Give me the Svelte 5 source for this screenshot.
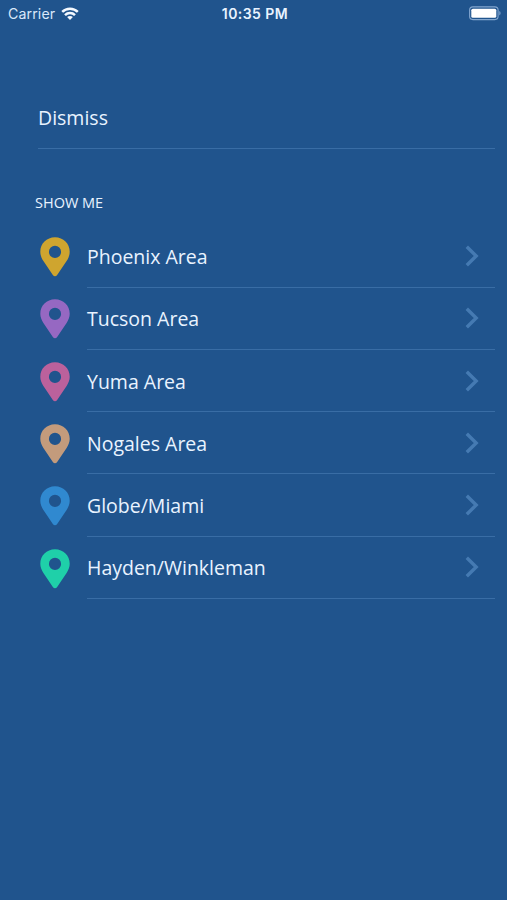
<script>
  const areas = [
    { name: 'Phoenix Area', color: '#cfa52f' },
    { name: 'Tucson Area', color: '#9668c2' },
    { name: 'Yuma Area', color: '#bb619c' },
    { name: 'Nogales Area', color: '#c39b7c' },
    { name: 'Globe/Miami', color: '#3089d0' },
    { name: 'Hayden/Winkleman', color: '#1fd0a9' }
  ];
</script>

<main>
  <header>
    <div class="carrier">
      <span>Carrier</span>
      <svg width="18" height="13" viewBox="0 0 18 13" fill="none" stroke="#f4f9ff" stroke-width="2.5">
        <path d="M1.2 4.9C5.5.7 12.5.7 16.8 4.9" />
        <path d="M4 8.1c2.8-2.7 7.2-2.7 10 0" />
        <path d="M9 12.9 6.1 10.1c1.6-1.5 4.2-1.5 5.8 0z" fill="#f4f9ff" stroke="none" />
      </svg>
    </div>
    <time>10:35 PM</time>
    <svg class="battery" width="33" height="15" viewBox="0 0 33 15">
      <rect x="0.6" y="0.9" width="28.5" height="12.7" rx="3.3" fill="none" stroke="#82a6cf" stroke-width="1.1" />
      <rect x="2.3" y="2.7" width="25" height="9.1" rx="1.6" fill="#fff" />
      <path d="M30.3 5.1c1.7.6 1.7 3.7 0 4.3z" fill="#82a6cf" />
    </svg>
  </header>

  <button class="dismiss">Dismiss</button>
  <h2>SHOW ME</h2>

  <ul>
    {#each areas as area}
      <li>
        <svg class="pin" width="30" height="40" viewBox="0 0 30 40">
          <path fill={area.color} fill-rule="evenodd" d="M15 .3C6.6.3.3 6.7.3 14.8c0 3.4 1.3 6.4 3.1 9.3l9.6 14.1c1 1.5 3 1.5 4 0l9.6-14.1c1.8-2.9 3.1-5.9 3.1-9.3C29.7 6.7 23.4.3 15 .3zM15 8.8a6.1 6.1 0 1 1 0 12.2 6.1 6.1 0 0 1 0-12.2z" />
        </svg>
        <div class="entry">
          <span>{area.name}</span>
          <svg width="15" height="22" viewBox="0 0 15 22" fill="none" stroke="#457ab2" stroke-width="3.4">
            <path d="m1.8 1.7 9.4 9.3-9.4 9.3" />
          </svg>
        </div>
      </li>
    {/each}
  </ul>
</main>

<style>
  :global(body) { background: #20548d; }
  main {
    box-sizing: border-box;
    width: 507px;
    height: 900px;
    overflow: hidden;
    background: #20548d;
    color: #e9f3ff;
    font-family: "Open Sans", sans-serif;
  }
  header {
    display: grid;
    grid-template-columns: 1fr auto 1fr;
    align-items: center;
    height: 27px;
    padding: 0 5px 0 8px;
    font-family: Inter, "Liberation Sans", sans-serif;
  }
  .carrier {
    display: flex;
    align-items: center;
    gap: 6px;
    font-size: 14.2px;
    letter-spacing: 0.1px;
    color: #d9e8fa;
  }
  time {
    font-size: 14px;
    font-weight: 600;
    letter-spacing: 0.45px;
  }
  .battery { justify-self: end; }
  .dismiss {
    display: block;
    width: 457px;
    height: 62px;
    margin: 60px 0 0 38px;
    padding: 0;
    border: 0;
    border-bottom: 1px solid #396da5;
    background: none;
    color: inherit;
    font: 19.5px/60px "Open Sans", sans-serif;
    text-align: left;
  }
  h2 {
    margin: 44px 0 0 35px;
    font-size: 14.5px;
    font-weight: 400;
    line-height: 20px;
  }
  ul {
    margin: 12.3px 12px 0 40px;
    padding: 0;
    list-style: none;
  }
  li {
    display: flex;
    height: 62.3px;
  }
  .pin { margin: 11.9px 17px 0 0; flex: none; }
  .entry {
    box-sizing: border-box;
    display: flex;
    flex: 1;
    align-items: center;
    justify-content: space-between;
    padding-right: 15px;
    border-bottom: 1px solid #396da5;
    font-size: 19.5px;
  }
  .entry span { padding-top: 1px; }
</style>
